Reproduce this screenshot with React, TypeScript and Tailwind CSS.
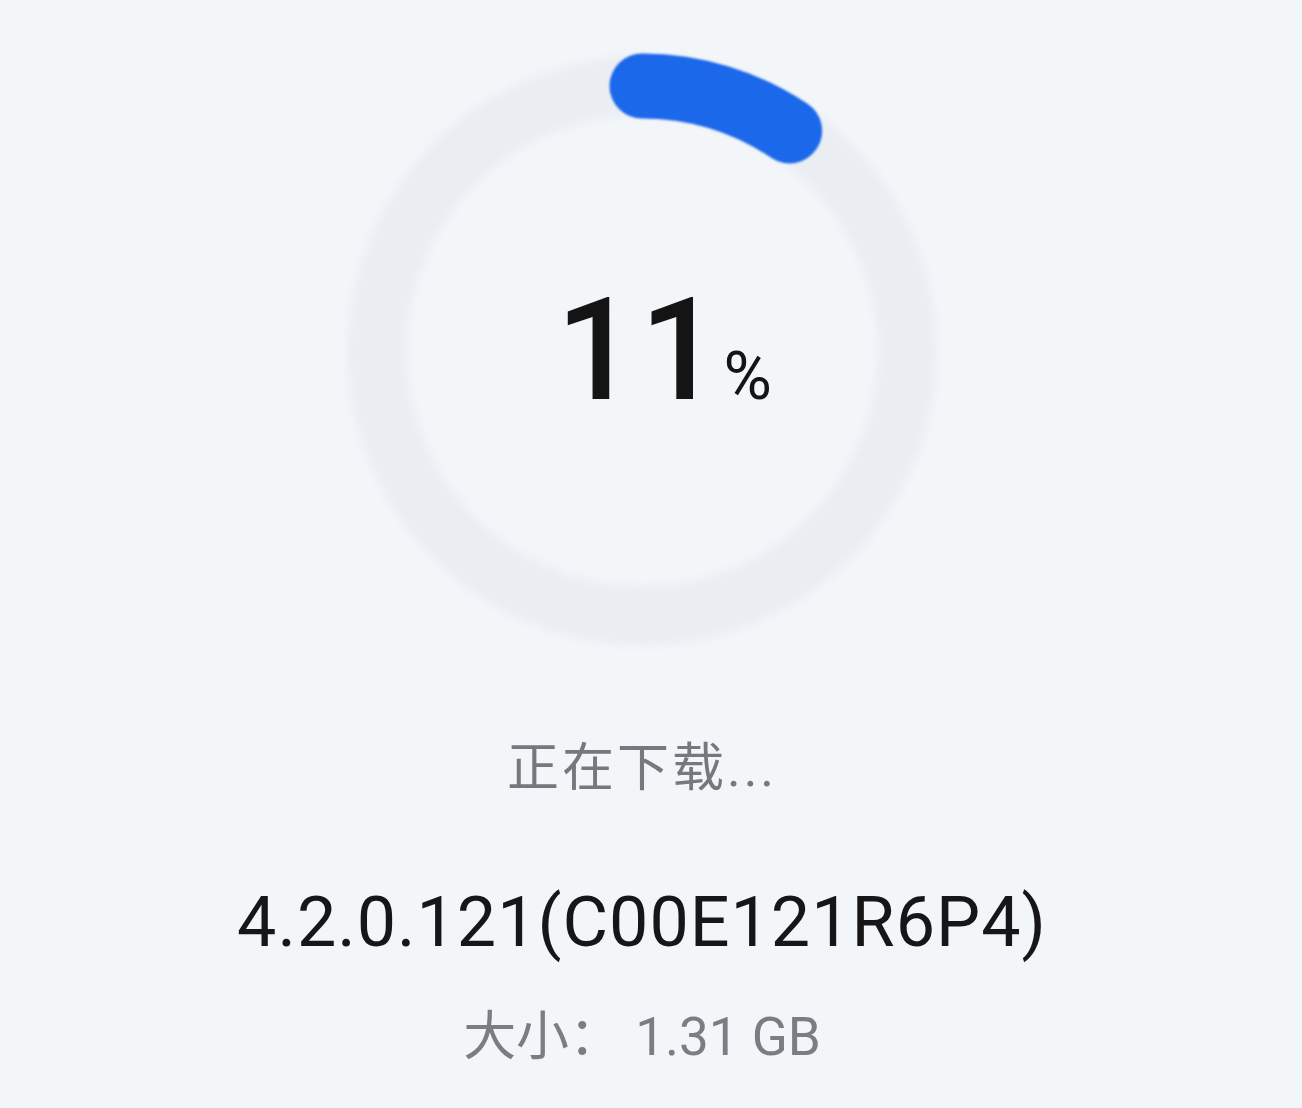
import React from 'react';

const R = 265;
const C = 2 * Math.PI * R;
const progress = 0.094;

export default function App() {
  return (
    <div className="w-full h-[1108px] bg-[#f3f6f9] flex flex-col items-center overflow-hidden pr-[18px]">
      {/* Progress ring */}
      <div className="relative w-[620px] h-[620px] mt-[41px] shrink-0">
        <svg width="620" height="620" viewBox="0 0 620 620">
          <defs>
            <filter id="soft" x="-10%" y="-10%" width="120%" height="120%">
              <feGaussianBlur stdDeviation="5" />
            </filter>
            <filter id="edge" x="-10%" y="-10%" width="120%" height="120%">
              <feGaussianBlur stdDeviation="1.2" />
            </filter>
            <linearGradient id="blue" gradientUnits="userSpaceOnUse" x1="300" y1="40" x2="500" y2="140">
              <stop offset="0%" stopColor="#3788f0" />
              <stop offset="100%" stopColor="#1d68ea" />
            </linearGradient>
          </defs>
          <circle cx="310" cy="310" r={R} fill="none" stroke="#eaeef3" strokeWidth="60" filter="url(#soft)" />
          <circle
            cx="310"
            cy="310"
            r={R}
            fill="none"
            stroke="url(#blue)"
            strokeWidth="65"
            strokeLinecap="round"
            strokeDasharray={`${C * progress} ${C}`}
            transform="rotate(-90 310 310)"
            filter="url(#edge)"
          />
        </svg>
        <div className="absolute inset-0 flex items-center justify-center">
          <div className="flex items-baseline text-[#141414] font-['Roboto',sans-serif] pl-[44px]">
            <span className="text-[142px] leading-none font-medium tracking-[3px]">11</span>
            <span className="text-[66px] leading-none font-normal">%</span>
          </div>
        </div>
      </div>

      <div className="mt-[82px] text-[52px] leading-none tracking-[3px] text-[#75797e] font-['Roboto','Noto_Sans_CJK_SC',sans-serif]">
        正在下载...
      </div>

      <div className="mt-[92px] text-[70px] leading-none tracking-[1px] text-[#161616] font-['Roboto',sans-serif]">
        4.2.0.121(C00E121R6P4)
      </div>

      <div className="mt-[54px] text-[53px] leading-none text-[#7a7d82] font-['Roboto','Noto_Sans_CJK_SC',sans-serif]">
        大小： 1.31 GB
      </div>
    </div>
  );
}
